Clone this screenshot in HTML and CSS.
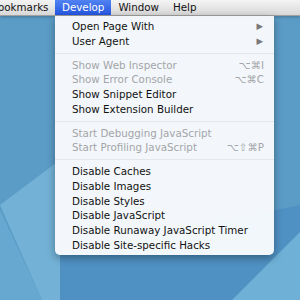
FILE: index.html
```html
<!DOCTYPE html>
<html lang="en">
<head>
    <meta charset="UTF-8">
    <title>Develop menu</title>
    <link rel="stylesheet" href="styles.css">
</head>
<body>
    <svg class="wallpaper" width="300" height="300" viewBox="0 0 300 300">
        <rect width="300" height="300" fill="#5b9cc7"/>
        <polygon points="0,205 60,160 60,300 42,300" fill="#73b2d6"/>
        <polygon points="0,210 42,300 0,300" fill="#66a8d0"/>
        <polygon points="60,255 300,205 300,235 235,300 60,300" fill="#4f91c3"/>
        <polygon points="300,232 300,300 232,300" fill="#6eb0d6"/>
    </svg>

    <div class="menubar">
        <span class="menubar-item first">ookmarks</span>
        <span class="menubar-item active">Develop</span>
        <span class="menubar-item">Window</span>
        <span class="menubar-item">Help</span>
    </div>

    <div class="menu">
        <div class="item"><span>Open Page With</span><span class="arrow">&#9654;</span></div>
        <div class="item"><span>User Agent</span><span class="arrow">&#9654;</span></div>
        <div class="sep"></div>
        <div class="item off"><span>Show Web Inspector</span><span class="key">&#8997;&#8984;I</span></div>
        <div class="item off"><span>Show Error Console</span><span class="key">&#8997;&#8984;C</span></div>
        <div class="item"><span>Show Snippet Editor</span></div>
        <div class="item"><span>Show Extension Builder</span></div>
        <div class="sep"></div>
        <div class="item off"><span>Start Debugging JavaScript</span></div>
        <div class="item off"><span>Start Profiling JavaScript</span><span class="key">&#8997;&#8679;&#8984;P</span></div>
        <div class="sep"></div>
        <div class="item"><span>Disable Caches</span></div>
        <div class="item"><span>Disable Images</span></div>
        <div class="item"><span>Disable Styles</span></div>
        <div class="item"><span>Disable JavaScript</span></div>
        <div class="item"><span>Disable Runaway JavaScript Timer</span></div>
        <div class="item"><span>Disable Site-specific Hacks</span></div>
    </div>
</body>
</html>
```

FILE: styles.css
```css
body {
    margin: 0;
    width: 300px;
    height: 300px;
    overflow: hidden;
    position: relative;
    font-family: 'DejaVu Sans', sans-serif;
    font-size: 10.3px;
    color: #111;
}
.wallpaper {
    position: absolute;
    left: 0;
    top: 0;
}
.menubar {
    position: relative;
    display: flex;
    height: 15px;
    align-items: center;
    background: linear-gradient(#f4f4f4, #d8d8d8);
    border-bottom: 1px solid #a0a0a0;
    box-shadow: 0 1px 3px rgba(0, 0, 0, 0.25);
}
.menubar-item {
    height: 15px;
    line-height: 15px;
    padding: 0 7px;
}
.menubar-item.first {
    width: 50px;
    padding: 0;
    margin-left: -2px;
    margin-right: 7px;
}
.menubar-item.active {
    background: linear-gradient(#5283f2, #2456e0);
    color: #fff;
}
.menu {
    position: absolute;
    left: 55px;
    top: 16px;
    width: 219px;
    box-sizing: border-box;
    padding: 3px 10px 3px 17px;
    background: rgba(248, 250, 253, 0.97);
    border-radius: 0 0 5px 5px;
    box-shadow: 0 3px 8px rgba(0, 0, 0, 0.35);
}
.item {
    display: flex;
    justify-content: space-between;
    align-items: center;
    height: 14.7px;
    line-height: 14.7px;
    white-space: nowrap;
}
.item.off {
    color: #a3a5a8;
}
.key {
    color: #a3a5a8;
    font-size: 10.3px;
}
.arrow {
    font-size: 8.5px;
    color: #7a7a7a;
    margin-right: 1px;
}
.sep {
    height: 1px;
    margin: 4.2px -10px 4.1px -17px;
    background: #e4e6ea;
}
```
